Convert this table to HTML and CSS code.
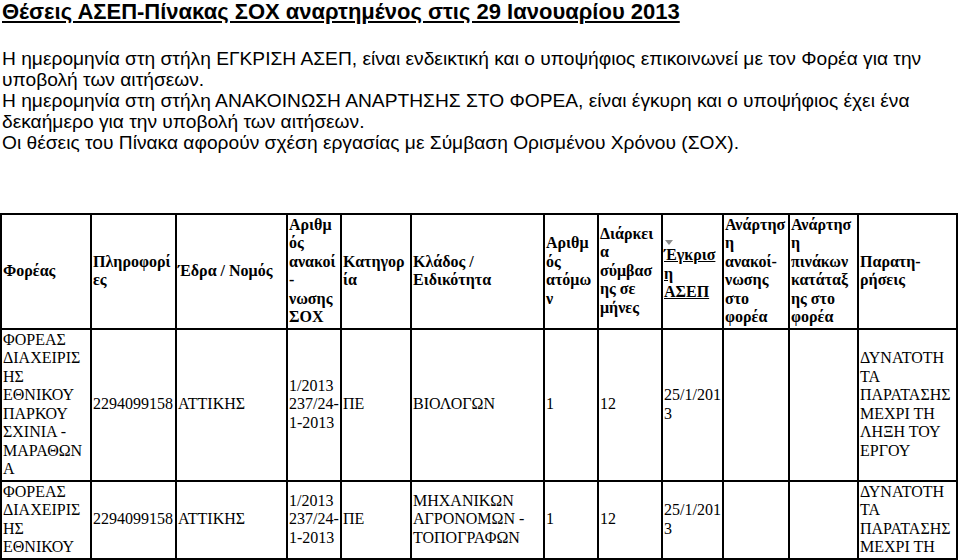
FILE: index.html
```html
<!DOCTYPE html>
<html lang="el">
<head>
<meta charset="utf-8">
<title>Θέσεις ΑΣΕΠ-Πίνακας ΣΟΧ</title>
<link rel="stylesheet" href="styles.css">
</head>
<body>
<div class="intro">
  <h1 class="title">Θέσεις ΑΣΕΠ-Πίνακας ΣΟΧ αναρτημένος στις 29 Ιανουαρίου 2013</h1>
  <p class="notes">Η ημερομηνία στη στήλη ΕΓΚΡΙΣΗ ΑΣΕΠ, είναι ενδεικτική και ο υποψήφιος επικοινωνεί με τον Φορέα για την υποβολή των αιτήσεων.<br>Η ημερομηνία στη στήλη ΑΝΑΚΟΙΝΩΣΗ ΑΝΑΡΤΗΣΗΣ ΣΤΟ ΦΟΡΕΑ, είναι έγκυρη και ο υποψήφιος έχει ένα δεκαήμερο για την υποβολή των αιτήσεων.<br>Οι θέσεις του Πίνακα αφορούν σχέση εργασίας με Σύμβαση Ορισμένου Χρόνου (ΣΟΧ).</p>
</div>
<table class="posts">
  <colgroup>
    <col class="c1"><col class="c2"><col class="c3"><col class="c4"><col class="c5"><col class="c6">
    <col class="c7"><col class="c8"><col class="c9"><col class="c10"><col class="c11"><col class="c12">
  </colgroup>
  <thead>
    <tr>
      <th>Φορέας</th>
      <th>Πληροφορίες</th>
      <th>Έδρα / Νομός</th>
      <th>Αριθμός ανακοί- νωσης ΣΟΧ</th>
      <th>Κατηγορία</th>
      <th>Κλάδος / Ειδικότητα</th>
      <th>Αριθμός ατόμων</th>
      <th>Διάρκεια σύμβασης σε μήνες</th>
      <th><svg class="sort" width="8" height="5" viewBox="0 0 8 5"><path d="M0 0H8L4 5Z" fill="#8c8c8c"/></svg><span class="link">Έγκριση ΑΣΕΠ</span></th>
      <th>Ανάρτηση ανακοί- νωσης στο φορέα</th>
      <th>Ανάρτηση πινάκων κατάταξης στο φορέα</th>
      <th>Παρατη- ρήσεις</th>
    </tr>
  </thead>
  <tbody>
    <tr>
      <td>ΦΟΡΕΑΣ ΔΙΑΧΕΙΡΙΣΗΣ ΕΘΝΙΚΟΥ ΠΑΡΚΟΥ ΣΧΙΝΙΑ - ΜΑΡΑΘΩΝΑ</td>
      <td>2294099158</td>
      <td>ΑΤΤΙΚΗΣ</td>
      <td>1/2013 237/24-1-2013</td>
      <td>ΠΕ</td>
      <td>ΒΙΟΛΟΓΩΝ</td>
      <td>1</td>
      <td>12</td>
      <td>25/1/2013</td>
      <td></td>
      <td></td>
      <td>ΔΥΝΑΤΟΤΗ<wbr>ΤΑ ΠΑΡΑΤΑΣΗΣ ΜΕΧΡΙ ΤΗ ΛΗΞΗ ΤΟΥ ΕΡΓΟΥ</td>
    </tr>
    <tr>
      <td>ΦΟΡΕΑΣ ΔΙΑΧΕΙΡΙΣΗΣ ΕΘΝΙΚΟΥ</td>
      <td>2294099158</td>
      <td>ΑΤΤΙΚΗΣ</td>
      <td>1/2013 237/24-1-2013</td>
      <td>ΠΕ</td>
      <td>ΜΗΧΑΝΙΚΩΝ ΑΓΡΟΝΟΜΩΝ - ΤΟΠΟΓΡΑΦΩΝ</td>
      <td>1</td>
      <td>12</td>
      <td>25/1/2013</td>
      <td></td>
      <td></td>
      <td>ΔΥΝΑΤΟΤΗ<wbr>ΤΑ ΠΑΡΑΤΑΣΗΣ ΜΕΧΡΙ ΤΗ</td>
    </tr>
  </tbody>
</table>
</body>
</html>
```
FILE: styles.css
```css
html, body {
  margin: 0;
  padding: 0;
  background: #fff;
  color: #000;
}
body {
  font-family: "Liberation Sans", Arial, sans-serif;
}
.intro {
  padding-left: 2px;
}
.title {
  margin: 0;
  font-size: 22px;
  line-height: 24.5px;
  font-weight: bold;
  text-decoration: underline;
}
.notes {
  margin: 23px 0 60px;
  font-size: 19.2px;
  line-height: 21px;
}
.posts {
  table-layout: fixed;
  width: 958px;
  border-collapse: separate;
  border-spacing: 0;
  border: 1px solid #000;
  font-family: "Liberation Serif", "Times New Roman", serif;
  font-size: 16px;
  line-height: 18.5px;
}
.posts th,
.posts td {
  border: 1px solid #000;
  padding: 1px;
  text-align: left;
  vertical-align: middle;
  overflow-wrap: break-word;
  word-wrap: break-word;
}
.posts th {
  font-weight: bold;
}
.c1 { width: 90px; }
.c2 { width: 85px; }
.c3 { width: 111px; }
.c4 { width: 54px; }
.c5 { width: 70px; }
.c6 { width: 133px; }
.c7 { width: 54px; }
.c8 { width: 64px; }
.c9 { width: 61px; }
.c10 { width: 66px; }
.c11 { width: 69px; }
.c12 { width: 99px; }
.sort {
  display: block;
  margin: 0 0 1px 1px;
}
.link {
  text-decoration: underline;
}
```
